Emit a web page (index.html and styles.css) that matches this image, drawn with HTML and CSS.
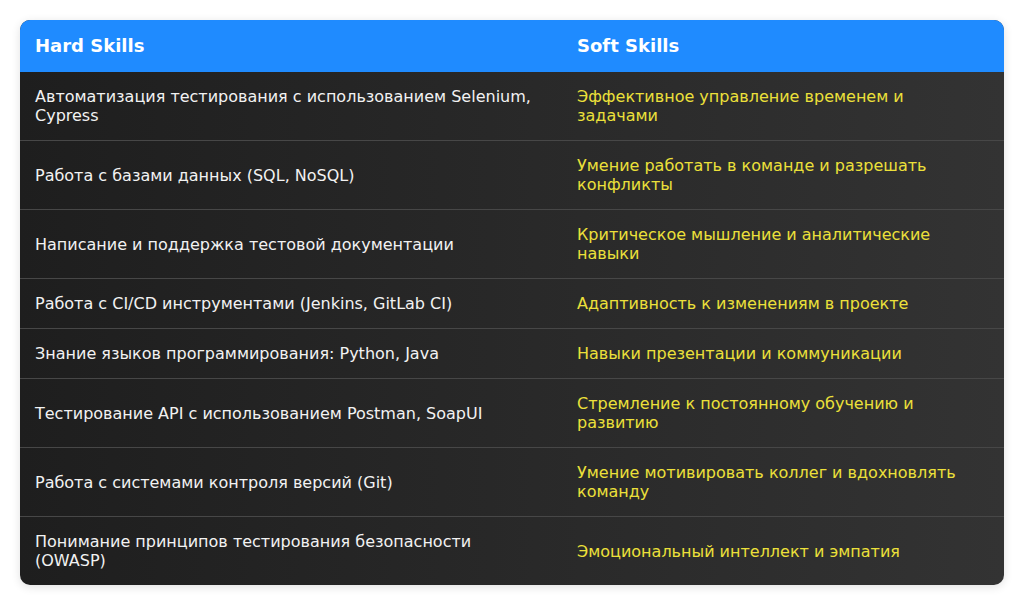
FILE: index.html
```html
<!DOCTYPE html>
<html lang="ru">
<head>
<meta charset="utf-8">
<link rel="stylesheet" href="styles.css">
</head>
<body>
<table class="skills">
  <thead>
    <tr><th class="col-hard">Hard Skills</th><th>Soft Skills</th></tr>
  </thead>
  <tbody>
    <tr><td class="hard">Автоматизация тестирования с использованием Selenium, Cypress</td><td class="soft">Эффективное управление временем и задачами</td></tr>
    <tr><td class="hard">Работа с базами данных (SQL, NoSQL)</td><td class="soft">Умение работать в команде и разрешать конфликты</td></tr>
    <tr><td class="hard">Написание и поддержка тестовой документации</td><td class="soft">Критическое мышление и аналитические навыки</td></tr>
    <tr><td class="hard">Работа с CI/CD инструментами (Jenkins, GitLab CI)</td><td class="soft">Адаптивность к изменениям в проекте</td></tr>
    <tr><td class="hard">Знание языков программирования: Python, Java</td><td class="soft">Навыки презентации и коммуникации</td></tr>
    <tr><td class="hard">Тестирование API с использованием Postman, SoapUI</td><td class="soft">Стремление к постоянному обучению и развитию</td></tr>
    <tr><td class="hard">Работа с системами контроля версий (Git)</td><td class="soft">Умение мотивировать коллег и вдохновлять команду</td></tr>
    <tr><td class="hard">Понимание принципов тестирования безопасности (OWASP)</td><td class="soft">Эмоциональный интеллект и эмпатия</td></tr>
  </tbody>
</table>
</body>
</html>
```
FILE: styles.css
```css
html, body {
  margin: 0;
  background: #ffffff;
}
body {
  padding: 20px;
  font-family: "DejaVu Sans", sans-serif;
}
.skills {
  width: 984px;
  border-collapse: separate;
  border-spacing: 0;
  border-radius: 10px;
  overflow: hidden;
  background: linear-gradient(90deg, #1e1e1e 0%, #333333 100%);
  box-shadow: 0 2px 10px rgba(0, 0, 0, 0.12);
  table-layout: fixed;
}
.skills th {
  background: #1f8bff;
  color: #ffffff;
  font-weight: bold;
  font-size: 18px;
  text-align: left;
  padding: 15px 15px 16px;
  line-height: 21px;
}
.skills .col-hard {
  width: 512px;
}
.skills td {
  color: #f2f2f2;
  font-size: 16px;
  line-height: 19px;
  padding: 15px 15px 15px;
  border-top: 1px solid #474747;
  vertical-align: middle;
}
.skills td.hard {
  padding-right: 18px;
}
.skills thead + tbody tr:first-child td {
  border-top: none;
}
.skills td.soft {
  color: #ece03a;
}
```
